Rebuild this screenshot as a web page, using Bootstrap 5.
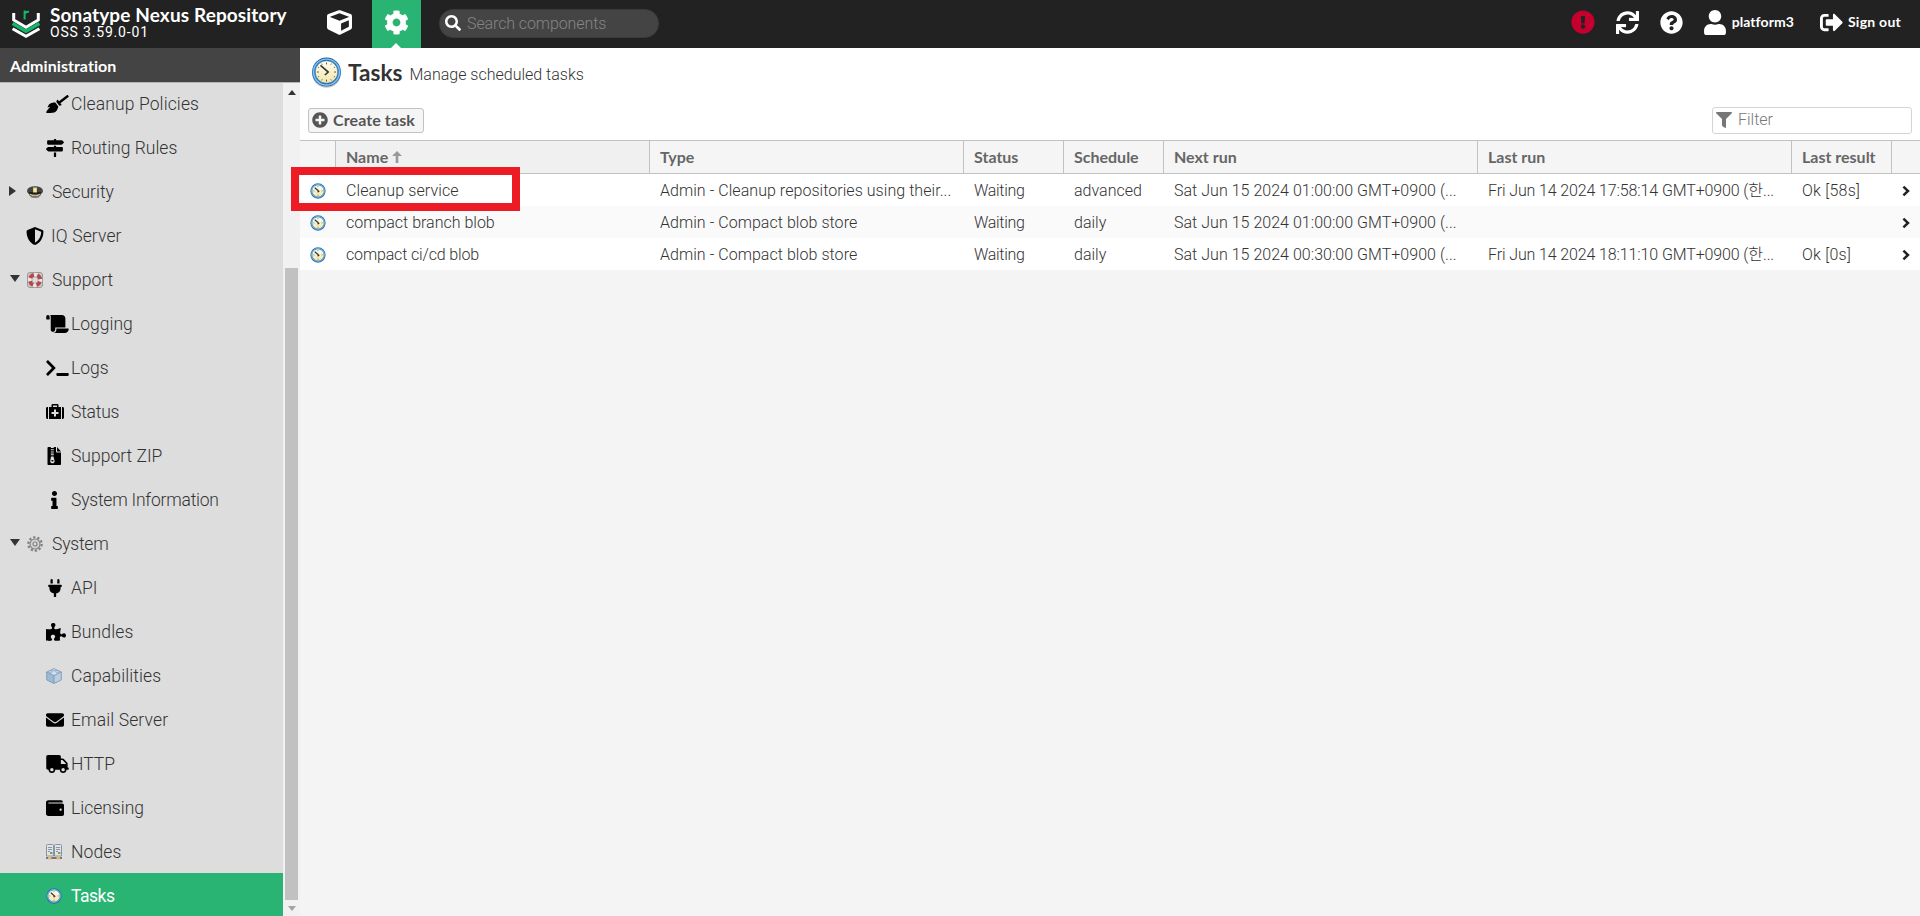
<!DOCTYPE html>
<html lang="en">
<head>
<meta charset="utf-8">
<meta name="viewport" content="width=device-width, initial-scale=1">
<title>Tasks - Sonatype Nexus Repository</title>
<link rel="stylesheet" href="https://cdn.jsdelivr.net/npm/bootstrap@5.3.0/dist/css/bootstrap.min.css">
<style>
  :root { --nx-green: #29b473; --nx-light: Roboto, "Noto Sans CJK KR", sans-serif; --nx-bold: Lato, Roboto, sans-serif; }
  body { font: 300 16px/20px var(--nx-light); color: #333; background: #f4f4f4; }
  svg { display: block; flex: none; fill: currentColor; overflow: visible; }
  b, th, .nx-b { font-family: var(--nx-bold); font-weight: 700; }

  .nx-top { height: 48px; background: #222; color: #fff; }
  .nx-brand { width: 315px; padding-left: 12px; }
  .nx-titles { margin: -3px 0 0 10px; }
  .nx-brand b { font-size: 19px; line-height: 20px; letter-spacing: .12px; }
  .nx-brand span { font-size: 14px; line-height: 15px; font-weight: 400; letter-spacing: .82px; }
  .nx-mode { width: 49px; height: 48px; }
  .nx-mode.on { margin-left: 8px; background: var(--nx-green); }
  .nx-mode.on::after { content: ""; position: absolute; left: 19px; bottom: 0; border: 5px solid transparent; border-top: 0; border-bottom-color: #fff; }
  .nx-search { width: 220px; height: 29px; margin: 0 0 1px 18px; padding-left: 5px; border-radius: 14px; background: #444; border: 1px solid #3a3a3a; }
  .nx-search span { color: #858585; margin-left: 6px; letter-spacing: -.1px; }
  .nx-search svg { margin-top: -2px; }
  .nx-acts { padding-right: 19px; font-size: 14px; }
  .nx-acts svg + svg { margin-left: 21px; }
  .nx-alert { fill: #c4002f; }

  .nx-side { width: 300px; background: #ddd; }
  .nx-side h2 { height: 35px; font: 700 16px/35px var(--nx-bold); letter-spacing: .05px; color: #fff; padding-left: 10px; margin: 0; background: #444; border-bottom: 1px solid #b5b5b5; }
  .nx-tree { margin-top: -2px; }
  .nx-tree a { height: 44px; padding-top: 1px; color: #333; font-size: 17.5px; text-decoration: none; }
  .nx-tree a svg { color: #000; }
  .nx-tree a.wider { letter-spacing: .12px; }
  .nx-tree a.tighter { letter-spacing: -.22px; }
  .nx-tree .pic { width: 25px; margin-left: 46px; flex: none; }
  .nx-tree .top .pic { margin-left: 0; width: 25px; }
  .nx-tree .arr { width: 27px; padding-left: 9px; flex: none; }
  .nx-tree .arr svg { color: #333; margin-top: -2px; }
  .nx-tree a.on { background: var(--nx-green); color: #fff; font-weight: 400; letter-spacing: -.5px; }
  .nx-scroll { width: 17px; background: #f1f1f1; padding: 7px 2px 5px; }
  .nx-scroll i { width: 13px; height: 632px; margin: 173px 0 6px; background: #c1c1c1; flex: none; }

  .nx-head { height: 92px; background: #fff; padding: 9px 8px 0; }
  .nx-head h1 { font: 700 22.6px/30px var(--nx-bold); margin: 0 7px 0 6px; }
  .nx-btn { height: 25px; margin-top: 4px; border: 1px solid #c2c2c2; border-radius: 3px; background: #f5f5f5; color: #555; padding: 0 8px 1px 3px; line-height: 20px; gap: 5px; }
  .nx-filter { width: 200px; height: 27px; margin-top: 3px; border: 1px solid #d5d5d5; border-radius: 3px; color: #777; padding: 0 0 1px 3px; gap: 6px; background: #fff; }

  .nx-grid { table-layout: fixed; margin: 0; border-collapse: separate; border-spacing: 0; }
  .nx-grid th { height: 34px; padding: 0 10px 1px; color: #666; background: #f5f5f5; border: 1px solid #c2c2c2; border-width: 1px 1px 1px 0; line-height: 31px; }
  .nx-grid th.sorted { background: #f0f0f0; }
  .nx-grid th:last-child { border-right: 0; }
  .nx-grid td { height: 32px; padding: 0 10px; border: 0; background: #fff; color: #333; line-height: 33px; height: 32px; white-space: nowrap; overflow: hidden; }
  .nx-grid tbody tr { height: 32px; }
  .nx-grid td { line-height: 32px; padding-top: 1px; line-height: 31px; vertical-align: middle; }
  .nx-grid tr:nth-child(even) td { background: #fafafa; }
  .nx-grid td:nth-child(3) { letter-spacing: .05px; }
  .nx-grid td:nth-child(4) { letter-spacing: -.3px; }
  .nx-grid td:nth-child(6) { letter-spacing: .03px; }
  .nx-grid td:nth-child(7) { letter-spacing: -.12px; }
  .nx-grid td:nth-child(8) { letter-spacing: .25px; }
  .nx-mark { position: absolute; left: -9px; top: 119px; width: 229px; height: 44px; border: 8px solid #ed1c24; }
</style>
</head>
<body class="vh-100 overflow-hidden d-flex flex-column">

<svg width="0" height="0" class="position-absolute">
  <defs>
    <linearGradient id="face" x1="0" y1="0" x2="0" y2="1"><stop offset="0" stop-color="#fffef0"/><stop offset="1" stop-color="#f3e6a8"/></linearGradient>
    <linearGradient id="rim" x1="0" y1="0" x2="0" y2="1"><stop offset="0" stop-color="#1c5f9f"/><stop offset=".5" stop-color="#2f86cf"/><stop offset="1" stop-color="#2268ac"/></linearGradient>
  </defs>
  <symbol id="cube" viewBox="0 0 512 512"><path d="M239.1 6.3l-208 78c-18.7 7-31.1 25-31.1 45v225.1c0 18.2 10.3 34.8 26.5 42.9l208 104c13.5 6.8 29.4 6.8 42.9 0l208-104c16.3-8.1 26.5-24.8 26.5-42.9V129.3c0-20-12.4-37.9-31.1-44.9l-208-78C262 2.2 250 2.2 239.1 6.3zM256 68.4l192 72v1.1l-192 78-192-78v-1.1l192-72zm32 356V275.5l160-65v133.9l-160 80z"/></symbol>
  <symbol id="cog" viewBox="0 0 512 512"><path d="M487.4 315.7l-42.6-24.6c4.3-23.2 4.3-47 0-70.2l42.6-24.6c4.9-2.8 7.1-8.6 5.5-14-11.1-35.6-30-67.8-54.7-94.6-3.8-4.1-10-5.1-14.8-2.3L380.8 110c-17.9-15.4-38.5-27.3-60.8-35.1V25.8c0-5.6-3.9-10.5-9.4-11.7-36.7-8.2-74.3-7.8-109.2 0-5.5 1.2-9.4 6.1-9.4 11.7V75c-22.2 7.9-42.8 19.8-60.8 35.1L88.7 85.5c-4.9-2.8-11-1.9-14.8 2.3-24.7 26.7-43.6 58.9-54.7 94.6-1.7 5.4.6 11.2 5.5 14L67.3 221c-4.3 23.2-4.3 47 0 70.2l-42.6 24.6c-4.9 2.8-7.1 8.6-5.5 14 11.1 35.6 30 67.8 54.7 94.6 3.8 4.1 10 5.1 14.8 2.3l42.6-24.6c17.9 15.4 38.5 27.3 60.8 35.1v49.2c0 5.6 3.9 10.5 9.4 11.7 36.7 8.2 74.3 7.8 109.2 0 5.5-1.2 9.4-6.1 9.4-11.7v-49.2c22.2-7.9 42.8-19.8 60.8-35.1l42.6 24.6c4.9 2.8 11 1.9 14.8-2.3 24.7-26.7 43.6-58.9 54.7-94.6 1.5-5.5-.7-11.3-5.6-14.1zM256 336c-44.1 0-80-35.9-80-80s35.9-80 80-80 80 35.9 80 80-35.9 80-80 80z"/></symbol>
  <symbol id="shield" viewBox="0 0 512 512"><path d="M466.5 83.7l-192-80a48.15 48.15 0 0 0-36.9 0l-192 80C27.7 91.1 16 108.6 16 128c0 198.5 114.5 335.7 221.5 380.3 11.8 4.9 25.1 4.9 36.9 0C360.1 472.6 496 349.3 496 128c0-19.4-11.7-36.9-29.5-44.3zM256.1 446.3l-.1-381 175.9 73.3c-3.3 151.4-82.1 261.1-175.8 307.7z"/></symbol>
  <symbol id="clock" viewBox="0 0 32 32">
    <ellipse cx="16" cy="17.5" rx="14.6" ry="14.3" fill="#000" opacity=".22"/>
    <circle cx="16" cy="15.5" r="15" fill="url(#rim)"/><circle cx="16" cy="15.5" r="13.4" fill="none" stroke="#8cc4f0" stroke-width="1.3"/><circle cx="16" cy="15.5" r="11.7" fill="url(#face)" stroke="#2a6dab" stroke-width=".7"/>
    <path d="M16 5.6v2M16 23.4v2M6.1 15.5h2M23.9 15.5h2M11 6.9l.5 1M21 6.9l-.5 1M7.4 10.5l1 .5M24.6 10.5l-1 .5M7.4 20.5l1-.5M24.6 20.5l-1-.5M11 24.1l.5-1M21 24.1l-.5-1" stroke="#555" stroke-width="1" fill="none"/>
    <path d="M9.8 8.6L17.8 15.6L14.3 18.6" fill="none" stroke="#333" stroke-width="1.6"/>
  </symbol>
  <symbol id="clock-s" viewBox="0 0 16 16">
    <circle cx="8" cy="8.6" r="7.3" fill="#000" opacity=".25"/>
    <circle cx="8" cy="7.9" r="7.6" fill="#2673b8"/><circle cx="8" cy="7.9" r="6.4" fill="none" stroke="#8cc4f0" stroke-width=".8"/><circle cx="8" cy="7.9" r="5.7" fill="url(#face)"/>
    <path d="M8 3.2v1M8 11.6v1M3.4 7.9h1M11.6 7.9h1" stroke="#777" stroke-width=".9"/><path d="M4.8 4.8L8.8 8.2L7.6 9.2" fill="none" stroke="#333" stroke-width="1.2"/>
  </symbol>
  <symbol id="next" viewBox="0 0 8 12"><path d="M1.4 1.6L6 6L1.4 10.4" fill="none" stroke="#222" stroke-width="2.5"/></symbol>
</svg>

<header class="nx-top d-flex align-items-center flex-shrink-0">
  <div class="nx-brand d-flex align-items-center">
    <svg width="28" height="30" viewBox="0 -1 28 30"><g fill="none" stroke-width="3.4"><path d="M1.7 3v7L14 17.3L26.3 10V3" stroke="#fff" stroke-width="3"/><path d="M.6 13.6L14 21.2L27.4 13.6" stroke="#12b76a"/><path d="M.6 18.8L14 26.4L27.4 18.8" stroke="#fff" stroke-width="3"/><path d="M12.6 9.500V.6M12.6 4Q13.4 1.400 17 1.800" stroke="#12b76a" stroke-width="2"/></g></svg>
    <div class="nx-titles d-flex flex-column"><b>Sonatype Nexus Repository</b><span>OSS 3.59.0-01</span></div>
  </div>
  <div class="nx-mode d-flex align-items-center justify-content-center pb-1"><svg width="25" height="25"><use href="#cube"/></svg></div>
  <div class="nx-mode on position-relative d-flex align-items-center justify-content-center pb-1"><svg width="25" height="25"><use href="#cog"/></svg></div>
  <div class="nx-search d-flex align-items-center">
    <svg width="16" height="16" viewBox="0 0 512 512"><path d="M505 442.7L405.3 343c-4.5-4.5-10.6-7-17-7H372c27.6-35.3 44-79.7 44-128C416 93.1 322.9 0 208 0S0 93.1 0 208s93.1 208 208 208c48.3 0 92.7-16.4 128-44v16.3c0 6.4 2.5 12.5 7 17l99.7 99.7c9.4 9.4 24.6 9.4 33.9 0l28.3-28.3c9.4-9.4 9.4-24.6.1-34zM208 336c-70.7 0-128-57.2-128-128 0-70.7 57.2-128 128-128 70.7 0 128 57.2 128 128 0 70.7-57.2 128-128 128z"/></svg>
    <span>Search components</span>
  </div>
  <div class="nx-acts nx-b d-flex align-items-center ms-auto pb-1">
    <svg class="nx-alert" width="24" height="24" viewBox="0 0 512 512"><path d="M504 256c0 136.997-111.043 248-248 248S8 392.997 8 256C8 119.083 119.043 8 256 8s248 111.083 248 248zm-248 50c-25.405 0-46 20.595-46 46s20.595 46 46 46 46-20.595 46-46-20.595-46-46-46zm-43.673-165.346l7.418 136c.347 6.364 5.609 11.346 11.982 11.346h48.546c6.373 0 11.635-4.982 11.982-11.346l7.418-136c.375-6.874-5.098-12.654-11.982-12.654h-63.383c-6.884 0-12.356 5.78-11.981 12.654z"/></svg>
    <svg width="23" height="23" viewBox="0 0 512 512"><path d="M440.65 12.57l4 82.77A247.16 247.16 0 0 0 255.83 8C134.73 8 33.91 94.92 12.29 209.82A12 12 0 0 0 24.09 224h49.05a12 12 0 0 0 11.67-9.26 175.91 175.91 0 0 1 317-56.94l-101.46-4.86a12 12 0 0 0-12.57 12v47.41a12 12 0 0 0 12 12H500a12 12 0 0 0 12-12V12a12 12 0 0 0-12-12h-47.37a12 12 0 0 0-11.98 12.57zM255.83 432a175.61 175.61 0 0 1-146-77.8l101.8 4.87a12 12 0 0 0 12.57-12v-47.4a12 12 0 0 0-12-12H12a12 12 0 0 0-12 12V500a12 12 0 0 0 12 12h47.35a12 12 0 0 0 12-12.6l-4.15-82.57A247.17 247.17 0 0 0 255.83 504c121.11 0 221.93-86.92 243.55-201.82a12 12 0 0 0-11.8-14.18h-49.05a12 12 0 0 0-11.67 9.26A175.86 175.86 0 0 1 255.83 432z"/></svg>
    <svg width="23" height="23" viewBox="0 0 512 512"><path d="M504 256c0 136.997-111.043 248-248 248S8 392.997 8 256C8 119.083 119.043 8 256 8s248 111.083 248 248zM262.655 90c-54.497 0-89.255 22.957-116.549 63.758-3.536 5.286-2.353 12.415 2.715 16.258l34.699 26.31c5.205 3.947 12.621 3.008 16.665-2.122 17.864-22.658 30.113-35.797 57.303-35.797 20.429 0 45.698 13.148 45.698 32.958 0 14.976-12.363 22.667-32.534 33.976C247.128 238.528 216 254.941 216 296v4c0 6.627 5.373 12 12 12h56c6.627 0 12-5.373 12-12v-1.333c0-28.462 83.186-29.647 83.186-106.667 0-58.002-60.165-102-116.531-102zM256 338c-25.365 0-46 20.635-46 46 0 25.364 20.635 46 46 46s46-20.636 46-46c0-25.365-20.635-46-46-46z"/></svg>
    <svg width="22" height="25" viewBox="0 0 448 512"><path d="M224 256c70.7 0 128-57.3 128-128S294.7 0 224 0 96 57.3 96 128s57.3 128 128 128zm89.6 32h-16.7c-22.2 10.2-46.9 16-72.9 16s-50.6-5.8-72.9-16h-16.7C60.2 288 0 348.2 0 422.4V464c0 26.5 21.5 48 48 48h352c26.5 0 48-21.5 48-48v-41.6c0-74.2-60.2-134.4-134.4-134.4z"/></svg>
    <span style="margin-left:6px;letter-spacing:.08px">platform3</span>
    <svg style="margin-left:26px" width="23" height="23" viewBox="0 0 512 512"><path d="M497 273L329 441c-15 15-41 4.5-41-17v-96H152c-13.3 0-24-10.7-24-24v-96c0-13.3 10.7-24 24-24h136V88c0-21.4 25.9-32 41-17l168 168c9.3 9.4 9.3 24.6 0 34zM192 436v-40c0-6.6-5.4-12-12-12H96c-17.7 0-32-14.3-32-32V160c0-17.7 14.3-32 32-32h84c6.6 0 12-5.4 12-12V76c0-6.6-5.4-12-12-12H96c-53 0-96 43-96 96v192c0 53 43 96 96 96h84c6.6 0 12-5.4 12-12z"/></svg>
    <span style="margin-left:5px;letter-spacing:.25px">Sign out</span>
  </div>
</header>

<div class="d-flex flex-grow-1" style="min-height:0">
  <aside class="nx-side d-flex flex-column flex-shrink-0">
    <h2>Administration</h2>
    <div class="d-flex flex-grow-1 overflow-hidden" style="min-height:0">
      <nav class="nx-tree flex-grow-1">
        <a class="wider d-flex align-items-center" href="#"><span class="pic"><svg width="23" height="18" viewBox="0 0 640 512"><path d="M256.5 216.8l86.7 109.2s-16.6 102.300-76.600 150.100C206.700 523.800 0 510.200 0 510.200s3.800-23.200 11-55.500l94.600-112.100c4-4.700-.9-11.700-6.600-9.500l-60.400 22.100c14.400-41.700 32.700-80.100 54.600-97.500 60-47.800 163.300-40.900 163.300-40.900zM636.500 31l-19.900-25c-5.400-6.900-15.500-8-22.400-2.500L361.800 181.200l-34.100-43c-5.100-6.400-15.200-5.200-18.600 2.200l-25.300 54.600 86.700 109.200 58.800-12.400c8-1.700 12.400-10.200 7.300-16.600l-34.100-43L634 53.500c6.900-5.500 8-15.600 2.500-22.500z"/></svg></span>Cleanup Policies</a>
        <a class="d-flex align-items-center" href="#"><span class="pic"><svg width="18" height="18" viewBox="0 0 512 512"><path d="M507.31 84.69L464 41.37c-6-6-14.14-9.37-22.63-9.37H288V16c0-8.84-7.16-16-16-16h-32c-8.84 0-16 7.16-16 16v16H56c-13.25 0-24 10.75-24 24v80c0 13.25 10.75 24 24 24h385.37c8.49 0 16.62-3.37 22.63-9.37l43.31-43.31c6.25-6.26 6.25-16.38 0-22.63zM224 496c0 8.84 7.16 16 16 16h32c8.84 0 16-7.16 16-16V384h-64v112zm232-272H288v-32h-64v32H70.63c-8.49 0-16.62 3.37-22.63 9.37L4.69 276.69c-6.25 6.25-6.25 16.38 0 22.63L48 342.63c6 6 14.14 9.37 22.63 9.37H456c13.25 0 24-10.75 24-24v-80c0-13.25-10.75-24-24-24z"/></svg></span>Routing Rules</a>
        <a class="top d-flex align-items-center" href="#"><span class="arr"><svg width="7" height="10" viewBox="0 0 7 10"><path d="M0 0L7 5L0 10z"/></svg></span><span class="pic"><svg width="16" height="16" viewBox="0 0 16 16"><ellipse cx="8" cy="7" rx="8" ry="4.800" fill="#444"/><path d="M2 8h12v3q-6 5-12 0z" fill="#222"/><path d="M2.500 9.700q5.500 2 11 0v1.300q-5.500 2.500-11 0z" fill="#d8c88a"/><path d="M6 3.500h4v5H6z" fill="#e0cd85"/><path d="M7.300 4.300h1.400v3.500H7.300z" fill="#fff5c0"/><ellipse cx="8" cy="12.700" rx="4.500" ry="1" fill="#777"/></svg></span>Security</a>
        <a class="wider top d-flex align-items-center" href="#"><span class="arr"></span><span class="pic" style="width:24px"><svg width="18" height="18" viewBox="1 0 18 18"><use href="#shield" width="18" height="18"/></svg></span>IQ Server</a>
        <a class="top d-flex align-items-center" href="#"><span class="arr"><svg width="10" height="7" viewBox="-1 0 10 7"><path d="M0 0H10L5 7z"/></svg></span><span class="pic"><svg width="16" height="16" viewBox="0 0 16 16"><rect x=".5" y=".5" width="15" height="15" rx="2.500" fill="#c9c9c9" stroke="#999"/><circle cx="8" cy="8" r="5.200" fill="none" stroke="#f0e4e4" stroke-width="4"/><circle cx="8" cy="8" r="5.200" fill="none" stroke="#b4484a" stroke-width="4" stroke-dasharray="4.700 3.467" stroke-dashoffset="6.440"/><circle cx="8" cy="8" r="3" fill="#ddd" stroke="#999" stroke-width=".6"/></svg></span>Support</a>
        <a class="d-flex align-items-center" href="#"><span class="pic"><svg width="23" height="18" viewBox="0 0 640 512"><path d="M48 0C21.530 0 0 21.530 0 48v64c0 8.840 7.160 16 16 16h80V48C96 21.530 74.470 0 48 0zm208 412.570V352h288V96c0-52.940-43.060-96-96-96H111.590C121.740 13.410 128 29.920 128 48v368c0 38.870 34.650 69.650 74.750 63.120C234.220 474 256 444.460 256 412.570zM288 384v32c0 52.930-43.060 96-96 96h336c61.860 0 112-50.140 112-112 0-8.840-7.160-16-16-16H288z"/></svg></span>Logging</a>
        <a class="d-flex align-items-center" href="#"><span class="pic"><svg width="23" height="18" viewBox="0 0 640 512"><path d="M257.981 272.971L63.638 467.314c-9.373 9.373-24.569 9.373-33.941 0L7.029 444.647c-9.357-9.357-9.375-24.522-.04-33.901L161.011 256 6.990 101.255c-9.335-9.379-9.317-24.544.04-33.901l22.667-22.667c9.373-9.373 24.569-9.373 33.941 0L257.981 239.030c9.373 9.372 9.373 24.568 0 33.941zM640 456v-32c0-13.255-10.745-24-24-24H312c-13.255 0-24 10.745-24 24v32c0 13.255 10.745 24 24 24h304c13.255 0 24-10.745 24-24z"/></svg></span>Logs</a>
        <a class="tighter d-flex align-items-center" href="#"><span class="pic"><svg width="18" height="18" viewBox="0 0 18 18"><path fill-rule="evenodd" d="M5.500 4V2.200Q5.500 1 6.700 1h4.600Q12.500 1 12.500 2.200V4H15V16H3V4zM7 2.500V4h4V2.500zM8 6.500V9H5.500v2H8v2.500h2V11h2.500V9H10V6.500zM2 4v12H1.400Q0 16 0 14.600V5.400Q0 4 1.400 4zM16 4v12h.6Q18 16 18 14.600V5.400Q18 4 16.600 4z"/></svg></span>Status</a>
        <a class="d-flex align-items-center" href="#"><span class="pic"><svg width="18" height="18" viewBox="-1.500 0 18 18"><path d="M1 0H8.500V4.700Q8.500 5.500 9.300 5.500H13.500V17.200Q13.500 18 12.700 18H.8Q0 18 0 17.200V.8Q0 0 1 0zM9.600 0L13.500 4.400H9.600z"/><path d="M4.800 0v9" stroke="#ddd" stroke-width="3" stroke-dasharray="1.100 1.100" fill="none"/><path d="M3.500 9.500L2.800 13.500a2.200 2.200 0 1 0 4.200 0L6 9.500z" fill="#ddd"/><ellipse cx="4.900" cy="13.700" rx="1.200" ry=".8"/></svg></span>Support ZIP</a>
        <a class="tighter d-flex align-items-center" href="#"><span class="pic"><svg width="7" height="18" style="margin-left:4.500px" viewBox="0 0 192 512"><path d="M20 424.229h20V279.771H20c-11.046 0-20-8.954-20-20V212c0-11.046 8.954-20 20-20h112c11.046 0 20 8.954 20 20v212.229h20c11.046 0 20 8.954 20 20V492c0 11.046-8.954 20-20 20H20c-11.046 0-20-8.954-20-20v-47.771c0-11.046 8.954-20 20-20zM96 0C56.235 0 24 32.235 24 72s32.235 72 72 72 72-32.235 72-72S135.764 0 96 0z"/></svg></span>System Information</a>
        <a class="tighter top d-flex align-items-center" href="#"><span class="arr"><svg width="10" height="7" viewBox="-1 0 10 7"><path d="M0 0H10L5 7z"/></svg></span><span class="pic"><svg width="16" height="16" viewBox="0 0 16 16"><g fill="none" stroke="#808080"><circle cx="8" cy="8" r="6.700" stroke-width="2.200" stroke-dasharray="2.300 1.910"/><circle cx="8" cy="8" r="5" fill="#d2d2d2" stroke-width="1.100"/><circle cx="8" cy="8" r="2" fill="#ddd" stroke-width="1.200"/></g></svg></span>System</a>
        <a class="d-flex align-items-center" href="#"><span class="pic"><svg width="14" height="18" style="margin-left:1.500px" viewBox="0 0 384 512"><path d="M320 32a32 32 0 0 0-64 0v96h64zm48 128H16a16 16 0 0 0-16 16v32a16 16 0 0 0 16 16h16v32a160.070 160.070 0 0 0 128 156.800V512h64v-99.200A160.070 160.070 0 0 0 352 256v-32h16a16 16 0 0 0 16-16v-32a16 16 0 0 0-16-16zM128 32a32 32 0 0 0-64 0v96h64z"/></svg></span>API</a>
        <a class="wider d-flex align-items-center" href="#"><span class="pic"><svg width="20" height="18" viewBox="0 0 576 512"><path d="M519.442 288.651c-41.519 0-59.500 31.593-82.058 31.593C377.409 320.244 432 144 432 144s-196.288 80-196.288-3.297c0-35.827 36.288-46.250 36.288-85.985C272 19.216 243.885 0 210.539 0c-34.654 0-66.366 18.891-66.366 56.346 0 41.364 31.711 59.277 31.711 81.750C175.885 207.719 0 166.758 0 166.758v333.237s178.635 41.047 178.635-28.662c0-22.473-40-40.107-40-81.471 0-37.456 29.250-56.346 63.577-56.346 33.673 0 61.788 19.216 61.788 54.717 0 39.735-36.288 50.158-36.288 85.985 0 60.803 129.675 25.730 181.230 25.730 0 0-34.725-120.101 25.827-120.101 35.962 0 46.423 36.152 86.308 36.152C556.712 416 576 387.990 576 354.443c0-34.199-18.962-65.792-56.558-65.792z"/></svg></span>Bundles</a>
        <a class="wider d-flex align-items-center" href="#"><span class="pic"><svg width="16" height="16" viewBox="0 0 16 16"><path d="M8 1L15 4L8 7.500L1 4z" fill="#d3e2ef"/><path d="M.7 4L8 7.500V15.500L.7 12z" fill="#9dbad4"/><path d="M15.300 4L8 7.500V15.500L15.300 12z" fill="#b8cfe2"/><path d="M8 .8L15.300 4V12L8 15.500L.7 12V4zM.7 4L8 7.500L15.300 4M8 7.500V15" fill="none" stroke="#7593ad" stroke-width=".8"/><ellipse cx="8" cy="1.900" rx="2" ry="1" fill="#c5d9ea" stroke="#7593ad" stroke-width=".5"/><ellipse cx="4.600" cy="3.700" rx="2" ry="1" fill="#c5d9ea" stroke="#7593ad" stroke-width=".5"/><ellipse cx="11.400" cy="3.700" rx="2" ry="1" fill="#c5d9ea" stroke="#7593ad" stroke-width=".5"/></svg></span>Capabilities</a>
        <a class="wider d-flex align-items-center" href="#"><span class="pic"><svg width="18" height="18" viewBox="0 0 512 512"><path d="M502.300 190.800c3.900-3.100 9.700-.2 9.700 4.700V400c0 26.500-21.500 48-48 48H48c-26.500 0-48-21.500-48-48V195.600c0-5 5.700-7.800 9.700-4.700 22.400 17.400 52.100 39.500 154.100 113.600 21.100 15.400 56.700 47.800 92.200 47.600 35.700.3 72-32.800 92.300-47.600 102-74.100 131.600-96.300 154-113.700zM256 320c23.200.4 56.600-29.200 73.400-41.400 132.700-96.300 142.800-104.700 173.400-128.700 5.800-4.500 9.200-11.500 9.200-18.900v-19c0-26.500-21.500-48-48-48H48c-26.500 0-48 21.500-48 48v19c0 7.400 3.400 14.300 9.200 18.900 30.600 23.900 40.700 32.400 173.400 128.700 16.800 12.200 50.200 41.800 73.400 41.400z"/></svg></span>Email Server</a>
        <a class="d-flex align-items-center" href="#"><span class="pic"><svg width="23" height="18" viewBox="0 0 640 512"><path d="M624 352h-16V243.900c0-12.700-5.100-24.900-14.100-33.900L494 110.100c-9-9-21.200-14.100-33.900-14.100H416V48c0-26.500-21.500-48-48-48H48C21.500 0 0 21.500 0 48v320c0 26.500 21.500 48 48 48h16c0 53 43 96 96 96s96-43 96-96h128c0 53 43 96 96 96s96-43 96-96h48c8.800 0 16-7.200 16-16v-32c0-8.800-7.200-16-16-16zM160 464c-26.500 0-48-21.500-48-48s21.500-48 48-48 48 21.500 48 48-21.500 48-48 48zm320 0c-26.500 0-48-21.500-48-48s21.500-48 48-48 48 21.500 48 48-21.500 48-48 48zm80-208H416V144h44.100l99.900 99.900V256z"/></svg></span>HTTP</a>
        <a class="d-flex align-items-center" href="#"><span class="pic"><svg width="18" height="18" viewBox="0 0 512 512"><path d="M461.200 128H80c-8.840 0-16-7.160-16-16s7.160-16 16-16h384c8.840 0 16-7.160 16-16 0-26.510-21.490-48-48-48H64C28.650 32 0 60.650 0 96v320c0 35.350 28.650 64 64 64h397.200c28.020 0 50.800-21.530 50.800-48V176c0-26.470-22.780-48-50.800-48zM416 336c-17.670 0-32-14.330-32-32s14.330-32 32-32 32 14.330 32 32-14.330 32-32 32z"/></svg></span>Licensing</a>
        <a class="wider d-flex align-items-center" href="#"><span class="pic"><svg width="16" height="16" viewBox="0 0 16 16"><path d="M.5 1.500Q.5.500 1.500.500H6.500Q7.500.500 7.500 1.500V12H.5zM8.500 1.500Q8.500.500 9.500.500H14.500Q15.500.500 15.500 1.500V12H8.500z" fill="#dfe4e8" stroke="#8b949c"/><path d="M2 3.500h4M2 5.500h4M10 3.500h4M10 5.500h4M2 7.500h2M10 7.500h2" stroke="#8796a3"/><path d="M4 9h2.500M12 9h2.500" stroke="#4b8a3a" stroke-width="1.600"/><path d="M0 14h16" stroke="#777" stroke-width="2"/><path d="M2 14h3.500M10.500 14H14" stroke="#e3b77c" stroke-width="3"/></svg></span>Nodes</a>
        <a class="on d-flex align-items-center" href="#"><span class="pic"><svg width="16" height="16"><use href="#clock-s"/></svg></span>Tasks</a>
      </nav>
      <div class="nx-scroll d-flex flex-column align-items-center">
        <svg width="8" height="5" viewBox="0 0 8 5" fill="#505050"><path d="M0 5L4 0L8 5z"/></svg>
        <i></i>
        <svg width="8" height="5" viewBox="0 0 8 5" style="fill:#a3a3a3"><path d="M0 0L4 5L8 0z"/></svg>
      </div>
    </div>
  </aside>

  <main class="flex-grow-1 position-relative" style="min-width:0">
    <div class="nx-head">
      <div class="d-flex align-items-center" style="padding-left:3px">
        <svg width="31" height="31"><use href="#clock"/></svg>
        <h1>Tasks</h1><span class="pt-1">Manage scheduled tasks</span>
      </div>
      <div class="d-flex align-items-start justify-content-between mt-3">
        <button type="button" class="nx-btn nx-b d-flex align-items-center"><svg width="16" height="16" viewBox="0 0 512 512"><path d="M256 8C119 8 8 119 8 256s111 248 248 248 248-111 248-248S393 8 256 8zm144 276c0 6.600-5.400 12-12 12h-92v92c0 6.600-5.400 12-12 12h-56c-6.600 0-12-5.400-12-12v-92h-92c-6.600 0-12-5.400-12-12v-56c0-6.600 5.400-12 12-12h92v-92c0-6.600 5.400-12 12-12h56c6.600 0 12 5.400 12 12v92h92c6.600 0 12 5.400 12 12v56z"/></svg><span style="letter-spacing:.1px">Create task</span></button>
        <div class="nx-filter d-flex align-items-center"><svg width="16" height="16" viewBox="0 0 512 512"><path d="M487.976 0H24.028C2.710 0-8.047 25.866 7.058 40.971L192 225.941V432c0 7.831 3.821 15.170 10.237 19.662l80 55.980C298.020 518.690 320 507.493 320 487.980V225.941l184.947-184.970C520.021 25.896 509.338 0 487.976 0z"/></svg><span>Filter</span></div>
      </div>
    </div>
    <table class="table nx-grid">
      <colgroup><col style="width:36px"><col style="width:314px"><col style="width:314px"><col style="width:100px"><col style="width:100px"><col style="width:314px"><col style="width:314px"><col style="width:100px"><col></colgroup>
      <thead><tr><th></th><th class="sorted"><span class="d-flex align-items-center gap-1">Name <svg width="10" height="12" viewBox="0 0 10 12" style="fill:#999"><path d="M5 0L10 5H6.300V12H3.700V5H0z"/></svg></span></th><th>Type</th><th>Status</th><th>Schedule</th><th>Next run</th><th>Last run</th><th>Last result</th><th></th></tr></thead>
      <tbody>
        <tr><td><svg width="16" height="16"><use href="#clock-s"/></svg></td><td><span style="letter-spacing:.12px">Cleanup service</span></td><td>Admin - Cleanup repositories using their...</td><td>Waiting</td><td>advanced</td><td>Sat Jun 15 2024 01:00:00 GMT+0900 (...</td><td>Fri Jun 14 2024 17:58:14 GMT+0900 (한...</td><td>Ok [58s]</td><td><svg width="8" height="12"><use href="#next"/></svg></td></tr>
        <tr><td><svg width="16" height="16"><use href="#clock-s"/></svg></td><td>compact branch blob</td><td>Admin - Compact blob store</td><td>Waiting</td><td>daily</td><td>Sat Jun 15 2024 01:00:00 GMT+0900 (...</td><td></td><td></td><td><svg width="8" height="12"><use href="#next"/></svg></td></tr>
        <tr><td><svg width="16" height="16"><use href="#clock-s"/></svg></td><td><span style="letter-spacing:-.15px">compact ci/cd blob</span></td><td>Admin - Compact blob store</td><td>Waiting</td><td>daily</td><td>Sat Jun 15 2024 00:30:00 GMT+0900 (...</td><td>Fri Jun 14 2024 18:11:10 GMT+0900 (한...</td><td>Ok [0s]</td><td><svg width="8" height="12"><use href="#next"/></svg></td></tr>
      </tbody>
    </table>
    <div class="nx-mark"></div>
  </main>
</div>

<script src="https://cdn.jsdelivr.net/npm/bootstrap@5.3.0/dist/js/bootstrap.bundle.min.js"></script>
</body>
</html>
